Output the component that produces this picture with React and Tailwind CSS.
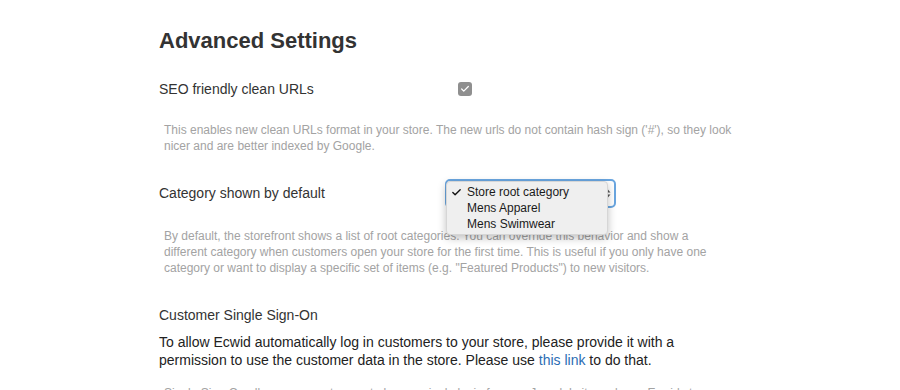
import { Check } from "lucide-react";

const font = { fontFamily: '"Liberation Sans", Arial, sans-serif' };

const CategorySelect = () => {
  return (
    <div className="relative w-[171px] h-[29px]">
      {/* closed select with focus ring */}
      <div className="flex items-center justify-end w-full h-full rounded-[5px] border-2 border-[#6aa6e0] bg-white pr-[3px]">
        <svg width="7" height="11" viewBox="0 0 7 11" className="text-[#555]">
          <path d="M0.5 4.5 L3.5 1 L6.5 4.5 Z" fill="currentColor" />
          <path d="M0.5 6.5 L3.5 10 L6.5 6.5 Z" fill="currentColor" />
        </svg>
      </div>

      {/* open native menu */}
      <div className="absolute left-[1px] top-[2px] w-[162px] rounded-[4px] bg-[#efefef] border border-[#d6d6d6] shadow-[0_3px_8px_rgba(0,0,0,0.25)] py-[2px] text-[12px] leading-[16px] text-[#1a1a1a]">
        <div className="flex items-center">
          <span className="w-[20px] pl-[4px] flex items-center">
            <Check size={11} strokeWidth={3} className="text-[#111]" />
          </span>
          <span>Store root category</span>
        </div>
        <div className="pl-[20px]">Mens Apparel</div>
        <div className="pl-[20px]">Mens Swimwear</div>
      </div>
    </div>
  );
};

const App = () => {
  return (
    <div className="w-[900px] h-[390px] overflow-hidden bg-white" style={font}>
      <div className="pl-[159px] pt-[28px] w-[750px]">
        <h1 className="text-[22px] leading-[26px] font-bold text-[#333]">Advanced Settings</h1>

        {/* SEO */}
        <div className="flex items-center mt-[25px] h-[20px]">
          <div className="w-[299px] text-[14px] text-[#333]">SEO friendly clean URLs</div>
          <div className="w-[14px] h-[14px] rounded-[3px] bg-[#8f8f8f] flex items-center justify-center">
            <Check size={10} strokeWidth={3} className="text-white" />
          </div>
        </div>
        <p className="mt-[23px] ml-[5px] w-[580px] text-[12px] leading-[16px] text-[#a3a3a3]">
          This enables new clean URLs format in your store. The new urls do not contain hash sign ('#'), so they look nicer and are better indexed by Google.
        </p>

        {/* Category */}
        <div className="flex items-center mt-[25px] h-[29px]">
          <div className="w-[286px] text-[14px] text-[#333]">Category shown by default</div>
          <CategorySelect />
        </div>
        <p className="mt-[20px] ml-[5px] w-[560px] text-[12px] leading-[16px] text-[#a3a3a3]">
          By default, the storefront shows a list of root categories. You can override this behavior and show a different category when customers open your store for the first time. This is useful if you only have one category or want to display a specific set of items (e.g. "Featured Products") to new visitors.
        </p>

        {/* SSO */}
        <div className="mt-[29px] text-[14px] leading-[20px] text-[#333]">Customer Single Sign-On</div>
        <p className="mt-[8px] w-[540px] text-[14px] leading-[18px] text-[#222]">
          To allow Ecwid automatically log in customers to your store, please provide it with a permission to use the customer data in the store. Please use{" "}
          <a className="text-[#2b6db3]">this link</a> to do that.
        </p>
        <p className="mt-[16px] ml-[5px] w-[580px] text-[12px] leading-[16px] text-[#a3a3a3]">
          Single Sign-On allows your customers to have a single login for your Joomla! site and your Ecwid store.
        </p>
      </div>
    </div>
  );
};

export default App;
